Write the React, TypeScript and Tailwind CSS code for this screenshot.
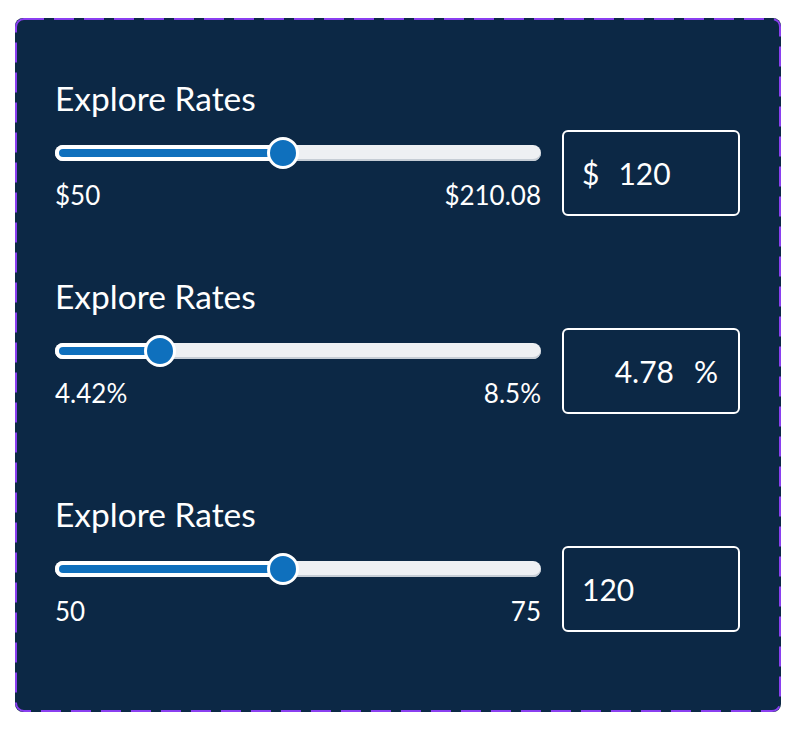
import React from "react";

type SliderProps = { pos: number; min: string; max: string };

function Slider({ pos, min, max }: SliderProps) {
  return (
    <div className="w-[486px] pt-[7px]">
      <div className="relative h-[32px] flex items-center">
        <div className="relative w-full h-[16px] rounded-full bg-[#eef0f3] shadow-[inset_0_-2px_0_#c6cdd5]">
          <div
            className="absolute left-0 top-0 h-[16px] rounded-full bg-white p-[4px]"
            style={{ width: pos + 8 }}
          >
            <div className="h-[8px] w-full rounded-full bg-[#0f70bd]" />
          </div>
        </div>
        <div
          className="absolute top-0 h-[32px] w-[32px] rounded-full border-[3px] border-white bg-[#0f70bd]"
          style={{ left: pos - 16 }}
        />
      </div>
      <div className="mt-[14px] flex justify-between text-[26px] leading-[24px] text-white">
        <span>{min}</span>
        <span>{max}</span>
      </div>
    </div>
  );
}

function Section({
  pos,
  min,
  max,
  box,
  className,
}: {
  pos: number;
  min: string;
  max: string;
  box: React.ReactNode;
  className?: string;
}) {
  return (
    <div className={className}>
      <div className="text-[33.5px] leading-[32px] text-white">Explore Rates</div>
      <div className="mt-[16px] flex gap-[21px]">
        <Slider pos={pos} min={min} max={max} />
        <div className="h-[86px] w-[178px] rounded-[6px] border-2 border-white flex items-center text-[30px] text-white">
          {box}
        </div>
      </div>
    </div>
  );
}

export default function App() {
  return (
    <div
      className="bg-white w-[796px] h-[730px] pt-[18px] pl-[15px]"
      style={{ fontFamily: "Lato, 'Open Sans', sans-serif" }}
    >
      <div className="relative w-[766px] h-[694px] rounded-[8px] bg-[#0c2845] pl-[40px] pt-[64px]">
        <svg
          className="absolute inset-0 pointer-events-none"
          width="766"
          height="694"
          viewBox="0 0 766 694"
        >
          <rect
            x="1"
            y="1"
            width="764"
            height="692"
            rx="8"
            fill="none"
            stroke="#8a3ff0"
            strokeWidth="2"
            strokeDasharray="20 10"
          />
        </svg>
        <Section
          pos={228}
          min="$50"
          max="$210.08"
          box={
            <div className="pl-[18px] flex gap-[19px]">
              <span>$</span>
              <span>120</span>
            </div>
          }
        />
        <Section
          className="mt-[64px]"
          pos={105}
          min="4.42%"
          max="8.5%"
          box={
            <div className="w-full pr-[20px] flex justify-end gap-[20px]">
              <span>4.78</span>
              <span>%</span>
            </div>
          }
        />
        <Section
          className="mt-[84px]"
          pos={228}
          min="50"
          max="75"
          box={<div className="pl-[18px]">120</div>}
        />
      </div>
    </div>
  );
}
